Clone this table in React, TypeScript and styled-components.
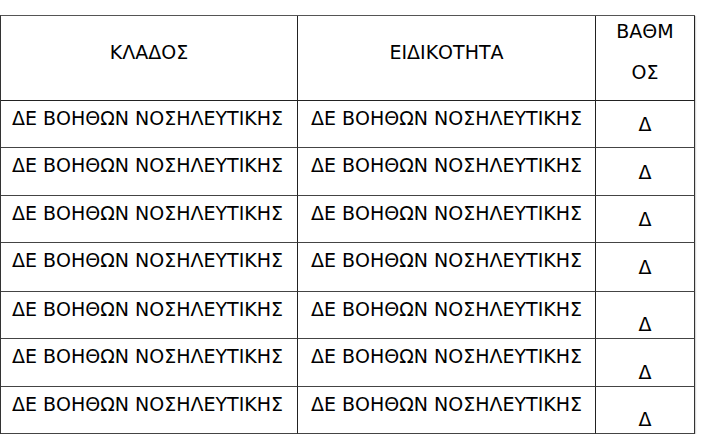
import React from 'react';
import styled, { createGlobalStyle } from 'styled-components';

const GlobalStyle = createGlobalStyle`
  body {
    margin: 0;
    background: #fff;
  }
`;

const rows = [
  { height: 47, grade: 'center' },
  { height: 48, grade: 'center' },
  { height: 47, grade: 'center' },
  { height: 49, grade: 'center' },
  { height: 47, grade: 'end' },
  { height: 48, grade: 'end' },
  { height: 47, grade: 'end' },
];

const App = () => {
  return (
    <>
      <GlobalStyle />
      <Page>
        <Table>
          <HeadCell>ΚΛΑΔΟΣ</HeadCell>
          <HeadCell>ΕΙΔΙΚΟΤΗΤΑ</HeadCell>
          <HeadCell>
            ΒΑΘΜ
            <br />
            ΟΣ
          </HeadCell>
          {rows.map((row, i) => (
            <React.Fragment key={i}>
              <Cell rowHeight={row.height}>ΔΕ ΒΟΗΘΩΝ ΝΟΣΗΛΕΥΤΙΚΗΣ</Cell>
              <Cell rowHeight={row.height} wide>ΔΕ ΒΟΗΘΩΝ ΝΟΣΗΛΕΥΤΙΚΗΣ</Cell>
              <GradeCell rowHeight={row.height} align={row.grade}>Δ</GradeCell>
            </React.Fragment>
          ))}
        </Table>
      </Page>
    </>
  );
};

export default App;

const Page = styled.div`
  padding-top: 15px;
  font-family: "DejaVu Sans", Verdana, sans-serif;
  color: #000;
`;

const Table = styled.div`
  display: grid;
  grid-template-columns: 297px 298px 99px;
  width: 695px;
  border-top: 1px solid #555;
  border-left: 1px solid #333;
  box-sizing: border-box;
  box-shadow: 1px 1px 1px rgba(0, 0, 0, 0.15);
`;

const HeadCell = styled.div`
  height: 85px;
  box-sizing: border-box;
  display: flex;
  align-items: center;
  justify-content: center;
  text-align: center;
  padding-bottom: 12px;
  font-size: 19px;
  line-height: 41px;
  border-right: 1px solid #222;
  border-bottom: 1px solid #222;
`;

interface CellProps {
  rowHeight: number;
  wide?: boolean;
}

const Cell = styled.div<CellProps>`
  height: ${props => props.rowHeight}px;
  box-sizing: border-box;
  padding: 6px 0 0 ${props => (props.wide ? 13 : 11)}px;
  font-size: 19px;
  line-height: 22px;
  white-space: nowrap;
  border-right: 1px solid #222;
  border-bottom: 1px solid #444;
`;

interface GradeProps {
  rowHeight: number;
  align: string;
}

const GradeCell = styled.div<GradeProps>`
  height: ${props => props.rowHeight}px;
  box-sizing: border-box;
  display: flex;
  justify-content: center;
  align-items: ${props => (props.align === 'end' ? 'flex-end' : 'center')};
  padding: ${props => (props.align === 'end' ? '0 0 3px' : '0')};
  font-size: 19px;
  line-height: 22px;
  border-right: 1px solid #333;
  border-bottom: 1px solid #444;
`;
